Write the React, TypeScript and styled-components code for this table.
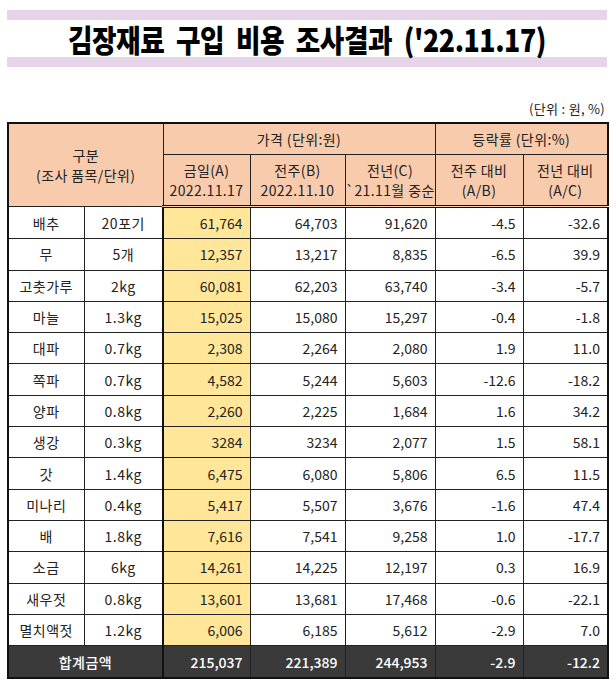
import React from "react";
import styled, { createGlobalStyle } from "styled-components";

const Global = createGlobalStyle`
  html, body { margin: 0; padding: 0; background: #ffffff; }
  body { font-family: "Noto Sans CJK KR", "Noto Sans", sans-serif; color: #111; }
`;

const Page = styled.div`
  width: 616px;
  padding: 10px 9px 0 7px;
  box-sizing: border-box;
`;

const Bar = styled.div`
  height: 10px;
  background: #e6d4e9;
`;

const TitleRow = styled.div`
  height: 37px;
  display: flex;
  align-items: center;
  justify-content: center;
`;

const Title = styled.h1`
  margin: 0;
  font-family: "Noto Sans CJK KR", sans-serif;
  font-weight: 900;
  font-size: 31px;
  line-height: 37px;
  color: #000;
  letter-spacing: -0.5px;
  word-spacing: 7px;
  transform: scaleX(0.86);
  white-space: nowrap;
`;

const Unit = styled.div`
  margin-top: 34px;
  height: 21px;
  text-align: right;
  font-size: 13px;
  line-height: 16px;
  letter-spacing: 0.3px;
  color: #222;
  padding-right: 2px;
`;

const Table = styled.table`
  width: 600px;
  border-collapse: collapse;
  table-layout: fixed;
  border: 2px solid #111;
  font-size: 14px;
`;

const Th = styled.th<{ $tall?: boolean }>`
  background: #f8cbad;
  border: 1px solid #222;
  font-weight: 400;
  font-size: 14px;
  letter-spacing: 0.4px;
  white-space: nowrap;
  color: #222;
  text-align: center;
  line-height: 20px;
  padding: 0;
  height: ${(p) => (p.$tall ? "50px" : "30px")};
`;

const HeadRow = styled.tr`
  &:last-child th { border-bottom: 3px double #111; }
`;

const Td = styled.td<{ $align?: "center" | "right"; $yellow?: boolean; $thick?: boolean }>`
  border: 1px solid #222;
  ${(p) => (p.$thick ? "border-left: 2px solid #111;" : "")}
  background: ${(p) => (p.$yellow ? "#ffe699" : "#ffffff")};
  text-align: ${(p) => p.$align ?? "right"};
  padding: ${(p) => (p.$align === "center" ? "0" : "0 7px 0 0")};
  letter-spacing: ${(p) => (p.$align === "center" ? "0.5px" : "0")};
  height: 30.3px;
  color: #222;
  white-space: nowrap;
`;

const TotalRow = styled.tr`
  td {
    background: #3a3a3a;
    color: #ffffff;
    height: 31px;
    font-weight: 500;
  }
`;

type Row = [string, string, string, string, string, string, string];

const rows: Row[] = [
  ["배추", "20포기", "61,764", "64,703", "91,620", "-4.5", "-32.6"],
  ["무", "5개", "12,357", "13,217", "8,835", "-6.5", "39.9"],
  ["고춧가루", "2kg", "60,081", "62,203", "63,740", "-3.4", "-5.7"],
  ["마늘", "1.3kg", "15,025", "15,080", "15,297", "-0.4", "-1.8"],
  ["대파", "0.7kg", "2,308", "2,264", "2,080", "1.9", "11.0"],
  ["쪽파", "0.7kg", "4,582", "5,244", "5,603", "-12.6", "-18.2"],
  ["양파", "0.8kg", "2,260", "2,225", "1,684", "1.6", "34.2"],
  ["생강", "0.3kg", "3284", "3234", "2,077", "1.5", "58.1"],
  ["갓", "1.4kg", "6,475", "6,080", "5,806", "6.5", "11.5"],
  ["미나리", "0.4kg", "5,417", "5,507", "3,676", "-1.6", "47.4"],
  ["배", "1.8kg", "7,616", "7,541", "9,258", "1.0", "-17.7"],
  ["소금", "6kg", "14,261", "14,225", "12,197", "0.3", "16.9"],
  ["새우젓", "0.8kg", "13,601", "13,681", "17,468", "-0.6", "-22.1"],
  ["멸치액젓", "1.2kg", "6,006", "6,185", "5,612", "-2.9", "7.0"],
];

const widths = [76, 79, 87, 95, 90, 88, 85];

export default function App() {
  return (
    <Page>
      <Global />
      <Bar />
      <TitleRow>
        <Title>김장재료 구입 비용 조사결과 ('22.11.17)</Title>
      </TitleRow>
      <Bar />
      <Unit>(단위 : 원, %)</Unit>
      <Table>
        <colgroup>
          {widths.map((w, i) => (
            <col key={i} style={{ width: w }} />
          ))}
        </colgroup>
        <thead>
          <HeadRow>
            <Th colSpan={2} rowSpan={2}>
              구분
              <br />
              (조사 품목/단위)
            </Th>
            <Th colSpan={3}>가격 (단위:원)</Th>
            <Th colSpan={2}>등락률 (단위:%)</Th>
          </HeadRow>
          <HeadRow>
            <Th $tall>
              금일(A)
              <br />
              2022.11.17
            </Th>
            <Th $tall>
              전주(B)
              <br />
              2022.11.10
            </Th>
            <Th $tall>
              전년(C)
              <br />
              `21.11월 중순
            </Th>
            <Th $tall>
              전주 대비
              <br />
              (A/B)
            </Th>
            <Th $tall>
              전년 대비
              <br />
              (A/C)
            </Th>
          </HeadRow>
        </thead>
        <tbody>
          {rows.map((r) => (
            <tr key={r[0]}>
              <Td $align="center">{r[0]}</Td>
              <Td $align="center">{r[1]}</Td>
              <Td $yellow $thick>{r[2]}</Td>
              <Td>{r[3]}</Td>
              <Td>{r[4]}</Td>
              <Td>{r[5]}</Td>
              <Td>{r[6]}</Td>
            </tr>
          ))}
          <TotalRow>
            <Td $align="center" colSpan={2}>합계금액</Td>
            <Td $thick>215,037</Td>
            <Td>221,389</Td>
            <Td>244,953</Td>
            <Td>-2.9</Td>
            <Td>-12.2</Td>
          </TotalRow>
        </tbody>
      </Table>
    </Page>
  );
}
